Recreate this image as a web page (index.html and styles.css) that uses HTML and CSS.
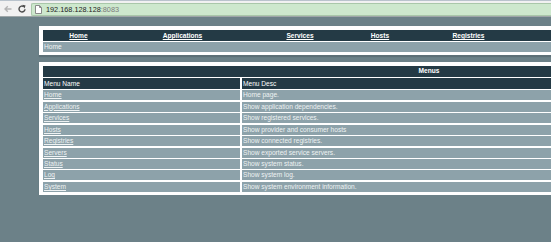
FILE: index.html
```html
<!DOCTYPE html>
<html>
<head>
<meta charset="utf-8">
<link rel="stylesheet" href="styles.css">
</head>
<body>
<div class="chrome">
  <div class="nav-btns">
    <svg class="ico" width="10" height="10" viewBox="0 0 10 10"><path d="M8.5 5H2M4.8 2.2L2 5l2.8 2.8" fill="none" stroke="#b4b4b4" stroke-width="1.4"/></svg>
    <svg class="ico" width="10" height="10" viewBox="0 0 10 10"><path d="M8 5.2A3 3 0 1 1 6.8 2.6" fill="none" stroke="#4a4a4a" stroke-width="1.4"/><path d="M5.6 0.8L8.6 1.6 7.4 4.4Z" fill="#4a4a4a"/></svg>
  </div>
  <div class="omnibox">
    <svg class="page-ico" width="7" height="9" viewBox="0 0 7 9"><path d="M0.5 0.5H4.5L6.5 2.5V8.5H0.5Z" fill="#fff" stroke="#8a8a8a"/><path d="M4.5 0.5V2.5H6.5" fill="none" stroke="#8a8a8a"/></svg>
    <span class="host">192.168.128.128</span><span class="port">:8083</span>
  </div>
</div>
<div class="page">
  <div class="box">
    <div class="topnav">
      <a href="#">Home</a>
      <a href="#">Applications</a>
      <a href="#">Services</a>
      <a href="#">Hosts</a>
      <a href="#">Registries</a>
    </div>
    <div class="crumb">Home</div>
  </div>
  <div class="box box-menus">
    <div class="menus">
      <div class="cap">Menus</div>
      <div class="th">Menu Name</div><div class="th">Menu Desc</div>
      <div class="td"><a href="#">Home</a></div><div class="td">Home page.</div>
      <div class="td"><a href="#">Applications</a></div><div class="td">Show application dependencies.</div>
      <div class="td"><a href="#">Services</a></div><div class="td">Show registered services.</div>
      <div class="td"><a href="#">Hosts</a></div><div class="td">Show provider and consumer hosts</div>
      <div class="td"><a href="#">Registries</a></div><div class="td">Show connected registries.</div>
      <div class="td"><a href="#">Servers</a></div><div class="td">Show exported service servers.</div>
      <div class="td"><a href="#">Status</a></div><div class="td">Show system status.</div>
      <div class="td"><a href="#">Log</a></div><div class="td">Show system log.</div>
      <div class="td"><a href="#">System</a></div><div class="td">Show system environment information.</div>
    </div>
  </div>
</div>
</body>
</html>
```
FILE: styles.css
```css
html, body {
  margin: 0;
  padding: 0;
  overflow: hidden;
  background: #6c8188;
  font-family: "Liberation Sans", Arial, sans-serif;
}
.chrome {
  height: 15px;
  background: #f1f1f1;
  border-top: 1px solid #b9c3cc;
  border-bottom: 1px solid #9ea6a8;
  display: flex;
  align-items: flex-start;
}
.nav-btns {
  width: 31px;
  display: flex;
  gap: 4px;
  padding: 3px 0 0 3px;
  box-sizing: border-box;
}
.ico { display: block; }
.omnibox {
  flex: 1;
  margin-top: 2px;
  height: 11px;
  background: #cde8cd;
  border: 1px solid #a9c7a9;
  border-right: none;
  border-radius: 2px 0 0 2px;
  display: flex;
  align-items: center;
  font-size: 7.3px;
  line-height: 11px;
}
.page-ico { margin: 0 4px 0 3px; display: block; }
.host { color: #1e1e1e; }
.port { color: #7b7b7b; }
.page {
  padding: 9px 0 0 39px;
  width: 780px;
}
.box {
  background: #fff;
  padding: 4px 4px 3px 4px;
  box-shadow: 0 2px 1px #5d7077;
}
.box-menus { margin-top: 7px; padding-top: 4px; }
.topnav {
  display: grid;
  grid-template-columns: 71px 137px 98px 62px 115px 1fr;
  background: #243a45;
  height: 11px;
  align-items: center;
  margin-bottom: 1px;
}
.topnav a {
  text-align: center;
  color: #fff;
  font-weight: bold;
  font-size: 6.6px;
  line-height: 11px;
  text-decoration: underline;
}
.crumb {
  background: #8da2aa;
  height: 10px;
  line-height: 10px;
  font-size: 6.6px;
  color: #eef2f3;
  padding-left: 1px;
}
.menus {
  display: grid;
  grid-template-columns: 197px 1fr;
  gap: 1.45px 2px;
  background: #fff;
}
.cap {
  grid-column: 1 / 3;
  background: #243a45;
  color: #fff;
  font-weight: bold;
  text-align: center;
  font-size: 6.6px;
  height: 10.5px;
  line-height: 10.5px;
}
.th {
  background: #243a45;
  color: #fff;
  font-size: 6.6px;
  height: 11px;
  line-height: 11px;
  padding-left: 1px;
}
.td {
  background: #8da2aa;
  color: #eef2f3;
  font-size: 6.6px;
  height: 10px;
  line-height: 10px;
  padding-left: 1px;
}
.td a {
  color: #eef2f3;
  text-decoration: underline;
}
```
